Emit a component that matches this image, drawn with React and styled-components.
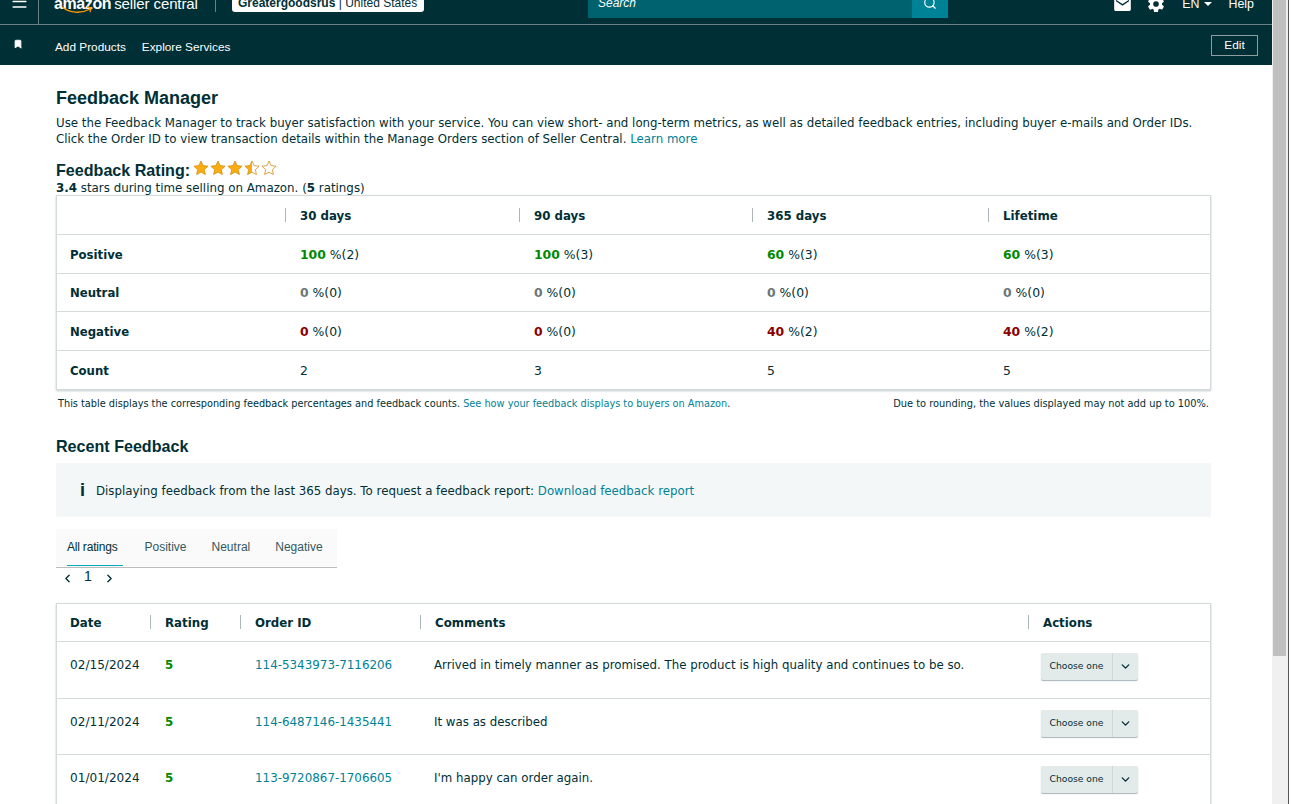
import React from 'react';
import styled, { createGlobalStyle } from 'styled-components';
import { Menu, Bookmark, ChevronDown, ChevronLeft, ChevronRight, Search } from 'lucide-react';
import { IoMdMail } from 'react-icons/io';
import { IoSettingsSharp } from 'react-icons/io5';

const Global = createGlobalStyle`
  html, body { margin: 0; padding: 0; height: 100%; overflow: hidden; background: #fff; }
  * { box-sizing: border-box; }
`;

const ember = `"DejaVu Sans", Verdana, sans-serif`;
const arial = `"Liberation Sans", Arial, sans-serif`;

const Frame = styled.div`
  display: flex;
  width: 1291px;
  height: 804px;
  overflow: hidden;
`;
const Page = styled.div`
  width: 1272px;
  flex: none;
  font-family: ${ember};
  font-size: 11.8px;
  color: #002f36;
`;
const ScrollTrack = styled.div`
  width: 17px;
  height: 804px;
  flex: none;
  background: #f0f0f0;
  border-right: 1px solid #555;
`;
const ScrollThumb = styled.div`
  height: 656px;
  margin: 0 2px 0 1px;
  background: #c0c0c0;
`;

const TopBar = styled.div`
  height: 25px;
  background: #002f36;
  border-bottom: 1px solid #6b8185;
  display: flex;
  align-items: flex-end;
  overflow: hidden;
  font-family: ${arial};
  color: #fff;
`;
const MenuCell = styled.div`
  width: 39px;
  height: 24px;
  border-right: 1px solid #6b8185;
  flex: none;
  display: flex;
  justify-content: center;
  color: #fff;
  svg { margin-top: -8px; }
`;
const Logo = styled.div`
  width: 176px;
  height: 24px;
  flex: none;
  padding-left: 15px;
  position: relative;
  font-size: 15px;
  line-height: 8px;
  white-space: nowrap;
  b { font-weight: 700; font-size: 16px; letter-spacing: -0.4px; }
  span { font-weight: 400; margin-left: 3px; letter-spacing: -0.1px; }
  svg { position: absolute; left: 22px; top: 6px; }
`;
const LogoRule = styled.div`
  width: 1px;
  height: 12px;
  margin-bottom: 12px;
  background: #6b8185;
  flex: none;
`;
const AccountBadge = styled.div`
  margin: 0 0 12px 16px;
  height: 13px;
  width: 192px;
  background: #fff;
  border-radius: 0 0 3px 3px;
  color: #002f36;
  font-size: 12px;
  line-height: 8px;
  padding-left: 6px;
  white-space: nowrap;
  overflow: hidden;
  flex: none;
  b { font-weight: 700; }
`;
const SearchBox = styled.div`
  margin: 0 0 6px 164px;
  width: 360px;
  height: 18px;
  flex: none;
  display: flex;
  background: #00626e;
  font-style: italic;
  font-size: 12px;
  line-height: 6px;
`;
const SearchText = styled.div`
  flex: 1;
  padding-left: 10px;
`;
const SearchButton = styled.div`
  width: 36px;
  background: #008296;
  display: flex;
  justify-content: center;
  svg { margin-top: -4px; }
`;
const TopRight = styled.div`
  margin-left: auto;
  height: 24px;
  display: flex;
  align-items: flex-start;
  font-size: 12.4px;
  padding-right: 18px;
  line-height: 8px;
`;
const TopItem = styled.div`
  margin-left: ${(p) => p.$gap || 0}px;
  display: flex;
  align-items: center;
  i { display: inline-block; margin-left: 4px; border: 4px solid transparent; border-top-color: #fff; border-bottom: 0; }
  svg { margin-top: -5px; display: block; }
`;

const SubBar = styled.div`
  height: 40px;
  background: #002f36;
  display: flex;
  align-items: center;
  color: #fff;
  font-family: ${arial};
  font-size: 11.8px;
  padding-right: 14px;
`;
const SubPin = styled.div`
  width: 55px;
  padding-left: 13px;
  display: flex;
  svg { margin-top: -3px; }
`;
const SubLink = styled.div`
  margin-right: 16px;
  margin-top: 3px;
`;
const EditButton = styled.div`
  margin-left: auto;
  width: 47px;
  height: 21px;
  border: 1px solid #8d9ea1;
  display: flex;
  align-items: center;
  justify-content: center;
`;

const Content = styled.div`
  padding: 23px 61px 0 56px;
`;
const Heading = styled.h1`
  margin: 0;
  font-family: ${arial};
  font-size: 18px;
  line-height: 20px;
  font-weight: 700;
  color: #002f36;
`;
const Intro = styled.p`
  margin: 7px 0 0;
  font-size: 11.8px;
  line-height: 16px;
  white-space: nowrap;
`;
const Link = styled.span`
  color: #008296;
`;
const RatingLine = styled.div`
  margin-top: 13px;
  display: flex;
  align-items: flex-start;
  height: 21px;
`;
const RatingTitle = styled.div`
  font-family: ${arial};
  font-size: 16.1px;
  font-weight: 700;
  line-height: 20px;
`;
const Stars = styled.div`
  display: flex;
  margin-left: 3px;
  svg { display: block; margin-right: 1px; }
`;
const RatingNote = styled.div`
  font-size: 11.85px;
  line-height: 14px;
  height: 14px;
`;

const Card = styled.div`
  border: 1px solid #d5dbdb;
  box-shadow: 0 1px 2px rgba(0, 47, 54, 0.25);
  background: #fff;
`;
const SummaryRow = styled.div`
  display: grid;
  grid-template-columns: 229px 234px 233px 236px 1fr;
  height: ${(p) => p.$h}px;
  align-items: center;
  border-top: ${(p) => (p.$first ? '0' : '1px solid #d5dbdb')};
`;
const HeadCell = styled.div`
  font-weight: 700;
  font-size: 11.8px;
  color: #002f36;
  height: 14px;
  line-height: 16px;
  padding-left: ${(p) => (p.$rule ? 14 : 13)}px;
  margin-left: ${(p) => (p.$rule ? -1 : 0)}px;
  border-left: ${(p) => (p.$rule ? '1px solid #a9b7b8' : '0')};
`;
const LabelCell = styled.div`
  padding-left: 13px;
  font-weight: 700;
  font-size: 11.7px;
  line-height: 16px;
  padding-top: 1px;
`;
const ValueCell = styled.div`
  padding: 1px 0 0 14px;
  font-size: 12.4px;
  line-height: 16px;
  b { font-weight: 700; color: ${(p) => p.$tone}; }
`;
const TableNotes = styled.div`
  display: flex;
  justify-content: space-between;
  margin-top: 7px;
  padding: 0 2px;
  line-height: 14px;
  white-space: nowrap;
`;
const TableNote = styled.div`
  font-size: ${(p) => p.$size}px;
`;
const SubHeading = styled.h2`
  margin: 25px 0 0;
  font-family: ${arial};
  font-size: 16.1px;
  line-height: 20px;
  font-weight: 700;
`;
const InfoBox = styled.div`
  margin-top: 7px;
  height: 54px;
  background: #f4f7f8;
  display: flex;
  align-items: center;
  padding-left: 24px;
  font-size: 11.8px;
  b { font-family: ${arial}; font-size: 18px; font-weight: 700; width: 16px; }
  span { padding-top: 2px; }
`;
const Tabs = styled.div`
  margin-top: 12px;
  width: 281px;
  height: 39px;
  background: #fafafa;
  border-bottom: 1px solid #bbb;
  display: flex;
  padding-left: 11px;
  font-family: ${arial};
  font-size: 12px;
`;
const Tab = styled.div`
  margin-right: ${(p) => p.$gap || 0}px;
  padding-right: ${(p) => (p.$active ? 5 : 0)}px;
  line-height: 37px;
  height: 37px;
  letter-spacing: ${(p) => (p.$active ? '-0.2px' : '0')};
  border-bottom: ${(p) => (p.$active ? '1px solid #00a8b8' : '0')};
  color: ${(p) => (p.$active ? '#002f36' : '#33585e')};
`;
const Pager = styled.div`
  height: 20px;
  display: flex;
  align-items: center;
  padding-left: 5px;
  font-family: ${arial};
  font-size: 14px;
  span { width: 28px; margin-right: 1px; text-align: center; margin-top: -4px; }
`;
const FeedbackTable = styled(Card)`
  margin-top: 15px;
`;
const FeedbackHead = styled.div`
  display: grid;
  grid-template-columns: 94px 90px 180px 608px 1fr;
  height: 37px;
  padding-bottom: 2px;
  align-items: center;
`;
const FeedbackRow = styled.div`
  display: grid;
  grid-template-columns: 94px 90px 180px 608px 1fr;
  height: ${(p) => p.$h}px;
  align-items: start;
  border-top: 1px solid #d5dbdb;
  font-size: 11.8px;
  line-height: 16px;
`;
const Cell = styled.div`
  padding: 15px 0 0 13px;
  white-space: nowrap;
`;
const DateCell = styled(Cell)`
  font-size: 12.1px;
`;
const Rating5 = styled(Cell)`
  padding-left: 14px;
  color: #008a00;
  font-weight: 700;
`;
const OrderLink = styled(Link)`
  padding: 15px 0 0 14px;
  font-size: 11.9px;
`;
const SplitButton = styled.div`
  display: flex;
  width: 97px;
  height: 27px;
  margin: 11px 0 0 12px;
  background: #e3eaea;
  border-radius: 2px;
  box-shadow: 0 1px 1px rgba(0, 47, 54, 0.35);
  font-size: 9.2px;
  align-items: center;
`;
const SplitLabel = styled.div`
  flex: 1;
  text-align: center;
  line-height: 25px;
  height: 27px;
  border-right: 1px solid #d0d8d8;
`;
const SplitCaret = styled.div`
  width: 25px;
  display: flex;
  justify-content: center;
`;

const starPath = 'M8 1l2.1 4.6 5 .6-3.7 3.4 1 5L8 12.1 3.6 14.6l1-5L.9 6.2l5-.6z';

function Star({ fill }) {
  return (
    <svg width="16" height="16" viewBox="0 0 16 16">
      <defs>
        <linearGradient id="half">
          <stop offset="50%" stopColor="#fbac0f" />
          <stop offset="50%" stopColor="#fff" />
        </linearGradient>
      </defs>
      <path d={starPath} fill={fill === 1 ? '#fbac0f' : fill === 0.5 ? 'url(#half)' : '#fff'} stroke="#d08f17" strokeWidth="0.8" />
    </svg>
  );
}

const summary = [
  { label: 'Positive', h: 39, tone: '#008a00', cells: [['100', '2'], ['100', '3'], ['60', '3'], ['60', '3']] },
  { label: 'Neutral', h: 38, tone: '#6c7778', cells: [['0', '0'], ['0', '0'], ['0', '0'], ['0', '0']] },
  { label: 'Negative', h: 39, tone: '#8b0000', cells: [['0', '0'], ['0', '0'], ['40', '2'], ['40', '2']] },
];

const feedback = [
  { date: '02/15/2024', id: '114-5343973-7116206', text: 'Arrived in timely manner as promised. The product is high quality and continues to be so.', h: 57 },
  { date: '02/11/2024', id: '114-6487146-1435441', text: 'It was as described', h: 56 },
  { date: '01/01/2024', id: '113-9720867-1706605', text: "I'm happy can order again.", h: 56 },
];

export default function App() {
  return (
    <Frame>
      <Global />
      <Page>
        <TopBar>
          <MenuCell><Menu size={19} strokeWidth={2} /></MenuCell>
          <Logo>
            <b>amazon</b><span>seller central</span>
            <svg width="32" height="9" viewBox="0 0 32 9"><path d="M1 1c8 6 19 7 28 2M26 1l4 1-1 4" fill="none" stroke="#f90" strokeWidth="1.4" /></svg>
          </Logo>
          <LogoRule />
          <AccountBadge><b>Greatergoodsrus</b> | United States</AccountBadge>
          <SearchBox>
            <SearchText>Search</SearchText>
            <SearchButton><Search size={14} /></SearchButton>
          </SearchBox>
          <TopRight>
            <TopItem><IoMdMail size={19} /></TopItem>
            <TopItem $gap={15}><IoSettingsSharp size={18} /></TopItem>
            <TopItem $gap={17}>EN<i /></TopItem>
            <TopItem $gap={17}>Help</TopItem>
          </TopRight>
        </TopBar>
        <SubBar>
          <SubPin><Bookmark size={10} fill="#fff" /></SubPin>
          <SubLink>Add Products</SubLink>
          <SubLink>Explore Services</SubLink>
          <EditButton>Edit</EditButton>
        </SubBar>
        <Content>
          <Heading>Feedback Manager</Heading>
          <Intro>
            Use the Feedback Manager to track buyer satisfaction with your service. You can view short- and long-term metrics, as well as detailed feedback entries, including buyer e-mails and Order IDs.
            <br />
            Click the Order ID to view transaction details within the Manage Orders section of Seller Central. <Link>Learn more</Link>
          </Intro>
          <RatingLine>
            <RatingTitle>Feedback Rating:</RatingTitle>
            <Stars>
              <Star fill={1} /><Star fill={1} /><Star fill={1} /><Star fill={0.5} /><Star fill={0} />
            </Stars>
          </RatingLine>
          <RatingNote><b>3.4</b> stars during time selling on Amazon. (<b>5</b> ratings)</RatingNote>
          <Card>
            <SummaryRow $h={38} $first>
              <HeadCell />
              <HeadCell $rule>30 days</HeadCell>
              <HeadCell $rule>90 days</HeadCell>
              <HeadCell $rule>365 days</HeadCell>
              <HeadCell $rule>Lifetime</HeadCell>
            </SummaryRow>
            {summary.map((row) => (
              <SummaryRow key={row.label} $h={row.h}>
                <LabelCell>{row.label}</LabelCell>
                {row.cells.map(([pct, n], i) => (
                  <ValueCell key={i} $tone={row.tone}>
                    <b>{pct}</b> %({n})
                  </ValueCell>
                ))}
              </SummaryRow>
            ))}
            <SummaryRow $h={39}>
              <LabelCell>Count</LabelCell>
              <ValueCell>2</ValueCell>
              <ValueCell>3</ValueCell>
              <ValueCell>5</ValueCell>
              <ValueCell>5</ValueCell>
            </SummaryRow>
          </Card>
          <TableNotes>
            <TableNote $size={9.75}>This table displays the corresponding feedback percentages and feedback counts. <Link>See how your feedback displays to buyers on Amazon</Link>.</TableNote>
            <TableNote $size={9.83}>Due to rounding, the values displayed may not add up to 100%.</TableNote>
          </TableNotes>
          <SubHeading>Recent Feedback</SubHeading>
          <InfoBox>
            <b>i</b>
            <span>Displaying feedback from the last 365 days. To request a feedback report: <Link>Download feedback report</Link></span>
          </InfoBox>
          <Tabs>
            <Tab $active $gap={22}>All ratings</Tab>
            <Tab $gap={25}>Positive</Tab>
            <Tab $gap={25}>Neutral</Tab>
            <Tab>Negative</Tab>
          </Tabs>
          <Pager>
            <ChevronLeft size={13} strokeWidth={2.5} />
            <span>1</span>
            <ChevronRight size={13} strokeWidth={2.5} />
          </Pager>
          <FeedbackTable>
            <FeedbackHead>
              <HeadCell>Date</HeadCell>
              <HeadCell $rule>Rating</HeadCell>
              <HeadCell $rule>Order ID</HeadCell>
              <HeadCell $rule>Comments</HeadCell>
              <HeadCell $rule>Actions</HeadCell>
            </FeedbackHead>
            {feedback.map((row) => (
              <FeedbackRow key={row.id} $h={row.h}>
                <DateCell>{row.date}</DateCell>
                <Rating5>5</Rating5>
                <OrderLink>{row.id}</OrderLink>
                <Cell>{row.text}</Cell>
                <SplitButton>
                  <SplitLabel>Choose one</SplitLabel>
                  <SplitCaret><ChevronDown size={13} strokeWidth={2.5} /></SplitCaret>
                </SplitButton>
              </FeedbackRow>
            ))}
          </FeedbackTable>
        </Content>
      </Page>
      <ScrollTrack><ScrollThumb /></ScrollTrack>
    </Frame>
  );
}
